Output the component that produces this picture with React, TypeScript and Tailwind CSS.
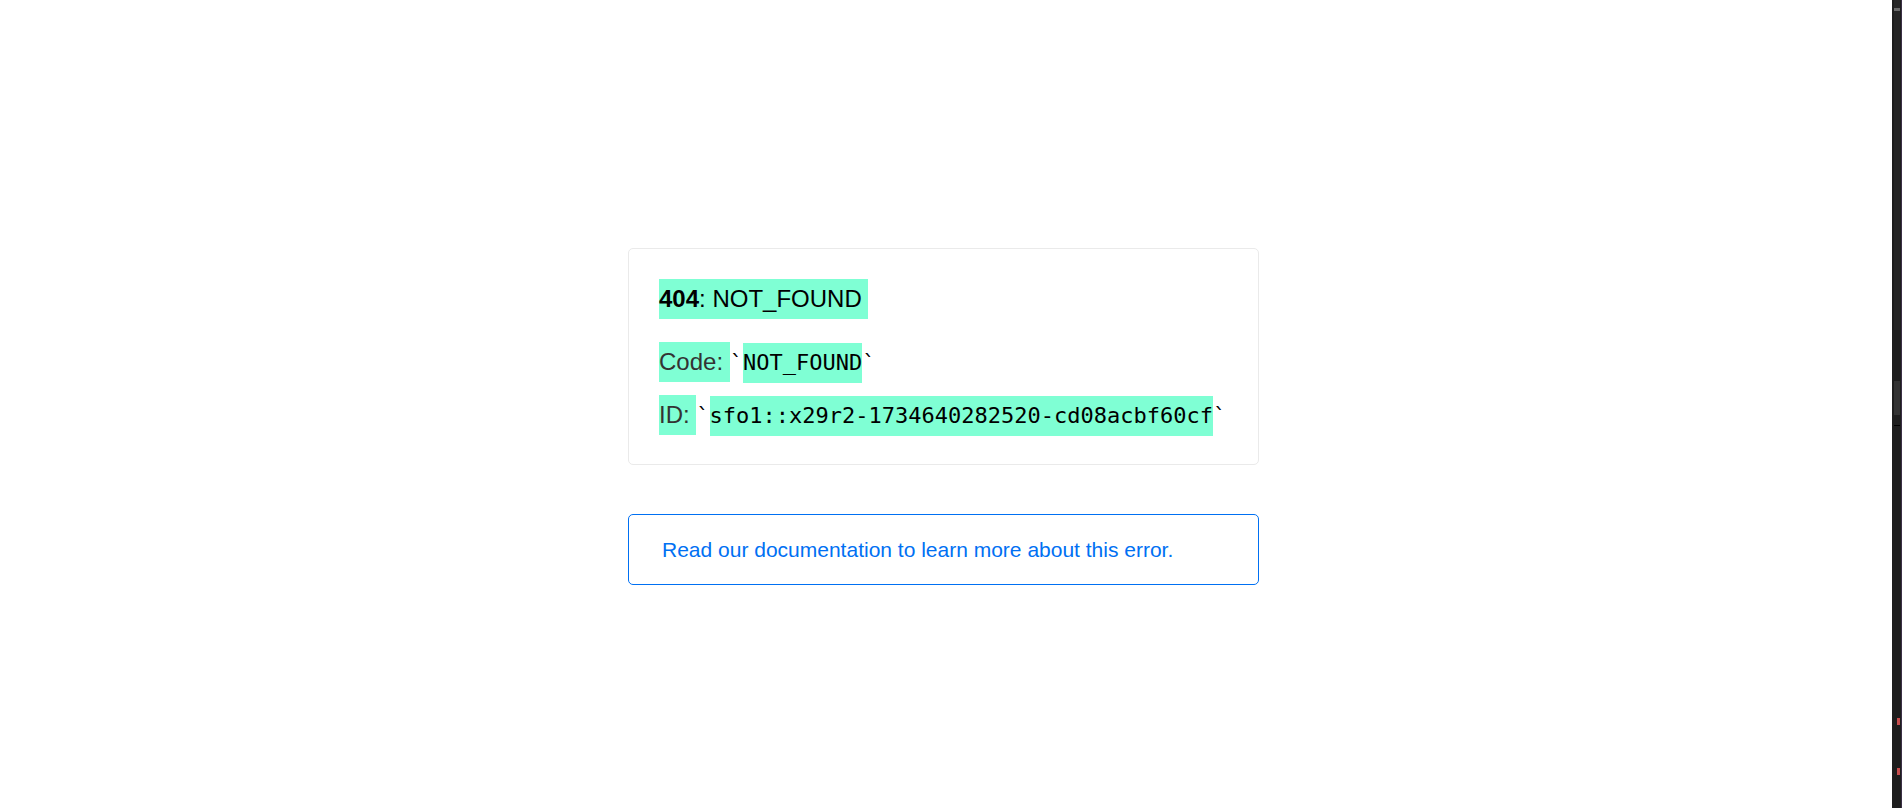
import React from "react";

const mono = "font-['DejaVu_Sans_Mono','Liberation_Mono',monospace]";

function Mark({ children, className = "" }: { children: React.ReactNode; className?: string }) {
  return <span className={`inline-block h-[40px] leading-[40px] bg-[#7fffd4] whitespace-pre ${className}`}>{children}</span>;
}

// editor scrollbar gutter on the right edge
function ScrollStrip() {
  return (
    <div className="flex w-[10px] shrink-0 bg-[#1e1e1e]">
      <div className="flex w-[9px] flex-col pl-[2px] pr-[1px]">
        <div className="h-[8px] bg-[#262626]" />
        <div className="h-[3px] bg-[#6b6b6b]" />
        <div className="h-[319px] bg-[#262626]" />
        <div className="h-[51px]" />
        <div className="h-[34px] bg-[#333333]" />
        <div className="h-[10px]" />
        <div className="h-[1px] bg-black" />
        <div className="h-[292px]" />
        <div className="ml-[3px] h-[7px] w-[3px] bg-[#c74e4e]" />
        <div className="h-[43px]" />
        <div className="ml-[3px] h-[7px] w-[3px] bg-[#c74e4e]" />
      </div>
      <div className="w-[1px] bg-[#3a2f45]" />
    </div>
  );
}

export default function App() {
  return (
    <div className="flex min-h-[808px] bg-white font-['Liberation_Sans',Arial,sans-serif]">
      <main className="flex flex-1 flex-col items-center pt-[248px] pr-[5px]">
        {/* Error card */}
        <div className="flex w-[631px] flex-col gap-[13px] rounded-[5px] border border-[#eaeaea] p-[30px]">
          <h1 className="mb-[10px] text-[24px] font-normal text-black">
            <Mark>
              <b>404</b>: NOT_FOUND{" "}
            </Mark>
          </h1>
          <p className="h-[40px] text-[24px] text-[#333]">
            <Mark>Code: </Mark>
            <span className={`${mono} text-[22px] text-black`}>`</span>
            <Mark className={`${mono} text-[22px] text-black`}>NOT_FOUND</Mark>
            <span className={`${mono} text-[22px] text-black`}>`</span>
          </p>
          <p className="h-[39px] text-[24px] text-[#333]">
            <Mark>ID: </Mark>
            <span className={`${mono} text-[22px] text-black`}>`</span>
            <Mark className={`${mono} text-[22px] text-black`}>sfo1::x29r2-1734640282520-cd08acbf60cf</Mark>
            <span className={`${mono} text-[22px] text-black`}>`</span>
          </p>
        </div>

        {/* Docs link */}
        <a className="mt-[49px] flex h-[71px] w-[631px] items-center rounded-[5px] border border-[#0070f3] px-[33px] text-[21px] text-[#0070f3]">
          Read our documentation to learn more about this error.
        </a>
      </main>
      <ScrollStrip />
    </div>
  );
}
